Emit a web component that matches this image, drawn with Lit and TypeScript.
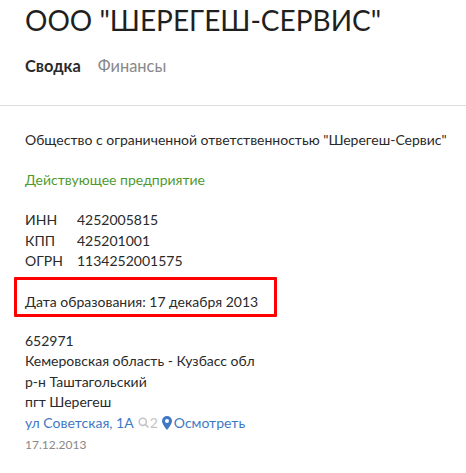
import { LitElement, html, css } from "lit";
import { customElement } from "lit/decorators.js";

@customElement("app-root")
export class AppRoot extends LitElement {
  static styles = css`
    :host { display: block; width: 466px; height: 473px; overflow: hidden; background: #fff; position: relative;
      font-family: "Lato", "Liberation Sans", sans-serif; color: #2a2a2a; font-size: 14px; }
    .head { padding: 0 25px; height: 106px; box-sizing: border-box; border-bottom: 1px solid #ddd; }
    h1 { margin: 0; font-size: 28px; font-weight: 400; line-height: 40px; color: #1f1f1f; }
    .tabs { display: flex; gap: 17px; margin-top: 16px; font-size: 16.4px; line-height: 20px; }
    .tabs b { font-weight: 700; }
    .tabs span { color: #888; }
    .body { padding: 0 25px; }
    .full { margin-top: 24px; line-height: 20px; white-space: nowrap; }
    .status { margin-top: 20px; line-height: 20px; color: #4f9a2f; }
    .codes { margin-top: 20px; display: grid; grid-template-columns: 52px auto; grid-auto-rows: 20.5px; line-height: 20.5px; }
    .date { margin-top: 20px; line-height: 20px; }
    .addr { margin-top: 19px; line-height: 20.5px; }
    .link { color: #3f78c4; display: flex; align-items: center; }
    .q { color: #c4c4c4; display: inline-flex; align-items: center; margin-left: 4px; gap: 1px; }
    .pin { margin-left: 4px; display: inline-flex; align-items: center; gap: 2px; }
    .when { font-size: 12px; color: #888; line-height: 20px; margin-top: 2px; }
    .mark { position: absolute; left: 14px; top: 277px; width: 263px; height: 40px; box-sizing: border-box;
      border: 3px solid #f00; border-radius: 1px; pointer-events: none; }
  `;
  render() {
    return html`
      <div class="head">
        <h1>ООО "ШЕРЕГЕШ-СЕРВИС"</h1>
        <div class="tabs"><b>Сводка</b><span>Финансы</span></div>
      </div>
      <div class="body">
        <div class="full">Общество с ограниченной ответственностью "Шерегеш-Сервис"</div>
        <div class="status">Действующее предприятие</div>
        <div class="codes">
          <div>ИНН</div><div>4252005815</div>
          <div>КПП</div><div>425201001</div>
          <div>ОГРН</div><div>1134252001575</div>
        </div>
        <div class="date">Дата образования: 17 декабря 2013</div>
        <div class="addr">
          <div>652971</div>
          <div>Кемеровская область - Кузбасс обл</div>
          <div>р-н Таштагольский</div>
          <div>пгт Шерегеш</div>
          <div class="link">ул Советская, 1А
            <span class="q"><svg width="11" height="11" viewBox="0 0 11 11" fill="none" stroke="#c4c4c4" stroke-width="1.6"><circle cx="4.8" cy="4.8" r="3.6"/><path d="M7.5 7.5 10.4 10.4"/></svg>2</span>
            <span class="pin"><svg width="10" height="14" viewBox="0 0 10 14"><path fill-rule="evenodd" fill="#3f78c4" d="M5 0a5 5 0 0 0-5 5c0 3.4 5 9 5 9s5-5.600 5-9a5 5 0 0 0-5-5Zm0 3a2 2 0 1 1 0 4 2 2 0 0 1 0-4Z"/></svg>Осмотреть</span>
          </div>
          <div class="when">17.12.2013</div>
        </div>
      </div>
      <div class="mark"></div>
    `;
  }
}
